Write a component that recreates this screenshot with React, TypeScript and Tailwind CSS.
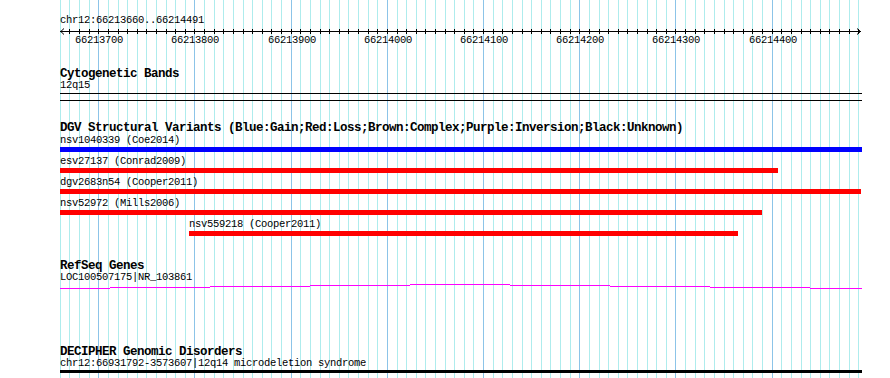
import React from "react";

// browser view: chr12:66213660..66214491, one grid line every 10 bp
const VIEW_START = 66213660;
const PX_PER_10BP = 9.62;
const GRID_LEFT = 59.8;
const COL_LEFT = 60;
const COL_WIDTH = 802;

const gridX = (k: number) => Math.round(GRID_LEFT + k * PX_PER_10BP);
const bpToCol = (bp: number) => gridX((bp - VIEW_START) / 10) - COL_LEFT;

const majorTicks = [66213700, 66213800, 66213900, 66214000, 66214100, 66214200, 66214300, 66214400];

interface Variant {
  label: string;
  color: string;
  left: number;
  width: number;
}

const variants: Variant[] = [
  { label: "nsv1040339 (Coe2014)", color: "bg-[#0000ff]", left: 0, width: 802 },
  { label: "esv27137 (Conrad2009)", color: "bg-[#ff0000]", left: 0, width: 718 },
  { label: "dgv2683n54 (Cooper2011)", color: "bg-[#ff0000]", left: 0, width: 801 },
  { label: "nsv52972 (Mills2006)", color: "bg-[#ff0000]", left: 0, width: 702 },
  { label: "nsv559218 (Cooper2011)", color: "bg-[#ff0000]", left: 129, width: 549 },
];

// gene line steps up one pixel every 100px toward the middle
const geneSteps = [
  [0, 50, 5],
  [50, 150, 4],
  [150, 250, 3],
  [250, 350, 2],
  [350, 450, 1],
  [450, 550, 2],
  [550, 650, 3],
  [650, 750, 4],
  [750, 802, 5],
];

const small = "h-[11px] leading-[11px] text-[10.5px] tracking-[-0.3px] whitespace-nowrap";
const title = "h-[12px] leading-[12px] text-[12.5px] font-bold tracking-[-0.5px] whitespace-nowrap";

const Grid = () => (
  <svg className="absolute inset-0 pointer-events-none" width={890} height={378}>
    {Array.from({ length: 84 }, (_, k) => {
      const major = (k - 4) % 10 === 0;
      const x = gridX(k) + 0.5;
      return (
        <line
          key={k}
          x1={x}
          x2={x}
          y1={0}
          y2={378}
          stroke={major ? "#8cc4e8" : "#aeeced"}
          strokeWidth={1}
        />
      );
    })}
  </svg>
);

const Ruler = () => (
  <>
    <svg width={COL_WIDTH} height={9} className="block">
      <rect x={0} y={5} width={801} height={1} fill="#000" />
      {Array.from({ length: 83 }, (_, k) => (
        <rect key={k} x={gridX(k + 1) - COL_LEFT} y={3} width={1} height={5} fill="#000" />
      ))}
      <path d="M4 2.5 L0.8 5.5 L4 8.5" fill="none" stroke="#000" strokeWidth={1} />
      <path d="M797 2.5 L800.5 5.5 L797 8.5" fill="none" stroke="#000" strokeWidth={1} />
    </svg>
    <div className={`${small} relative`}>
      {majorTicks.map((bp) => (
        <span key={bp} className="absolute top-0 -translate-x-1/2" style={{ left: bpToCol(bp) + 1 }}>
          {bp}
        </span>
      ))}
    </div>
  </>
);

export default function App() {
  return (
    <div className="relative w-[890px] h-[378px] overflow-hidden bg-white text-black font-['Liberation_Mono','DejaVu_Sans_Mono',monospace]">
      <Grid />
      <div className="relative flex flex-col pl-[60px] w-[862px]">
        <div className={`${small} mt-[15px]`}>chr12:66213660..66214491</div>
        <Ruler />

        <div className={`${title} mt-[22px]`}>Cytogenetic Bands</div>
        <div className={small}>12q15</div>
        <div className="mt-[2px] h-[8px] border-y border-black" />

        <div className={`${title} mt-[21px]`}>
          DGV Structural Variants (Blue:Gain;Red:Loss;Brown:Complex;Purple:Inversion;Black:Unknown)
        </div>
        {variants.map((v, i) => (
          <div key={v.label} className={i === 0 ? "mt-[1px]" : "mt-[4px]"}>
            <div className={small} style={{ paddingLeft: v.left }}>
              {v.label}
            </div>
            <div className={`mt-[1px] h-[5px] ${v.color}`} style={{ marginLeft: v.left, width: v.width }} />
          </div>
        ))}

        <div className={`${title} mt-[24px]`}>RefSeq Genes</div>
        <div className={small}>LOC100507175|NR_103861</div>
        <svg width={COL_WIDTH} height={6} className="block">
          {geneSteps.map(([x1, x2, y]) => (
            <rect key={x1} x={x1} y={y} width={x2 - x1} height={1} fill="#ff00ff" />
          ))}
        </svg>

        <div className={`${title} mt-[57px]`}>DECIPHER Genomic Disorders</div>
        <div className={small}>chr12:66931792-3573607|12q14 microdeletion syndrome</div>
        <div className="mt-[1px] h-[3px] w-[802px] bg-black" />
      </div>
    </div>
  );
}
